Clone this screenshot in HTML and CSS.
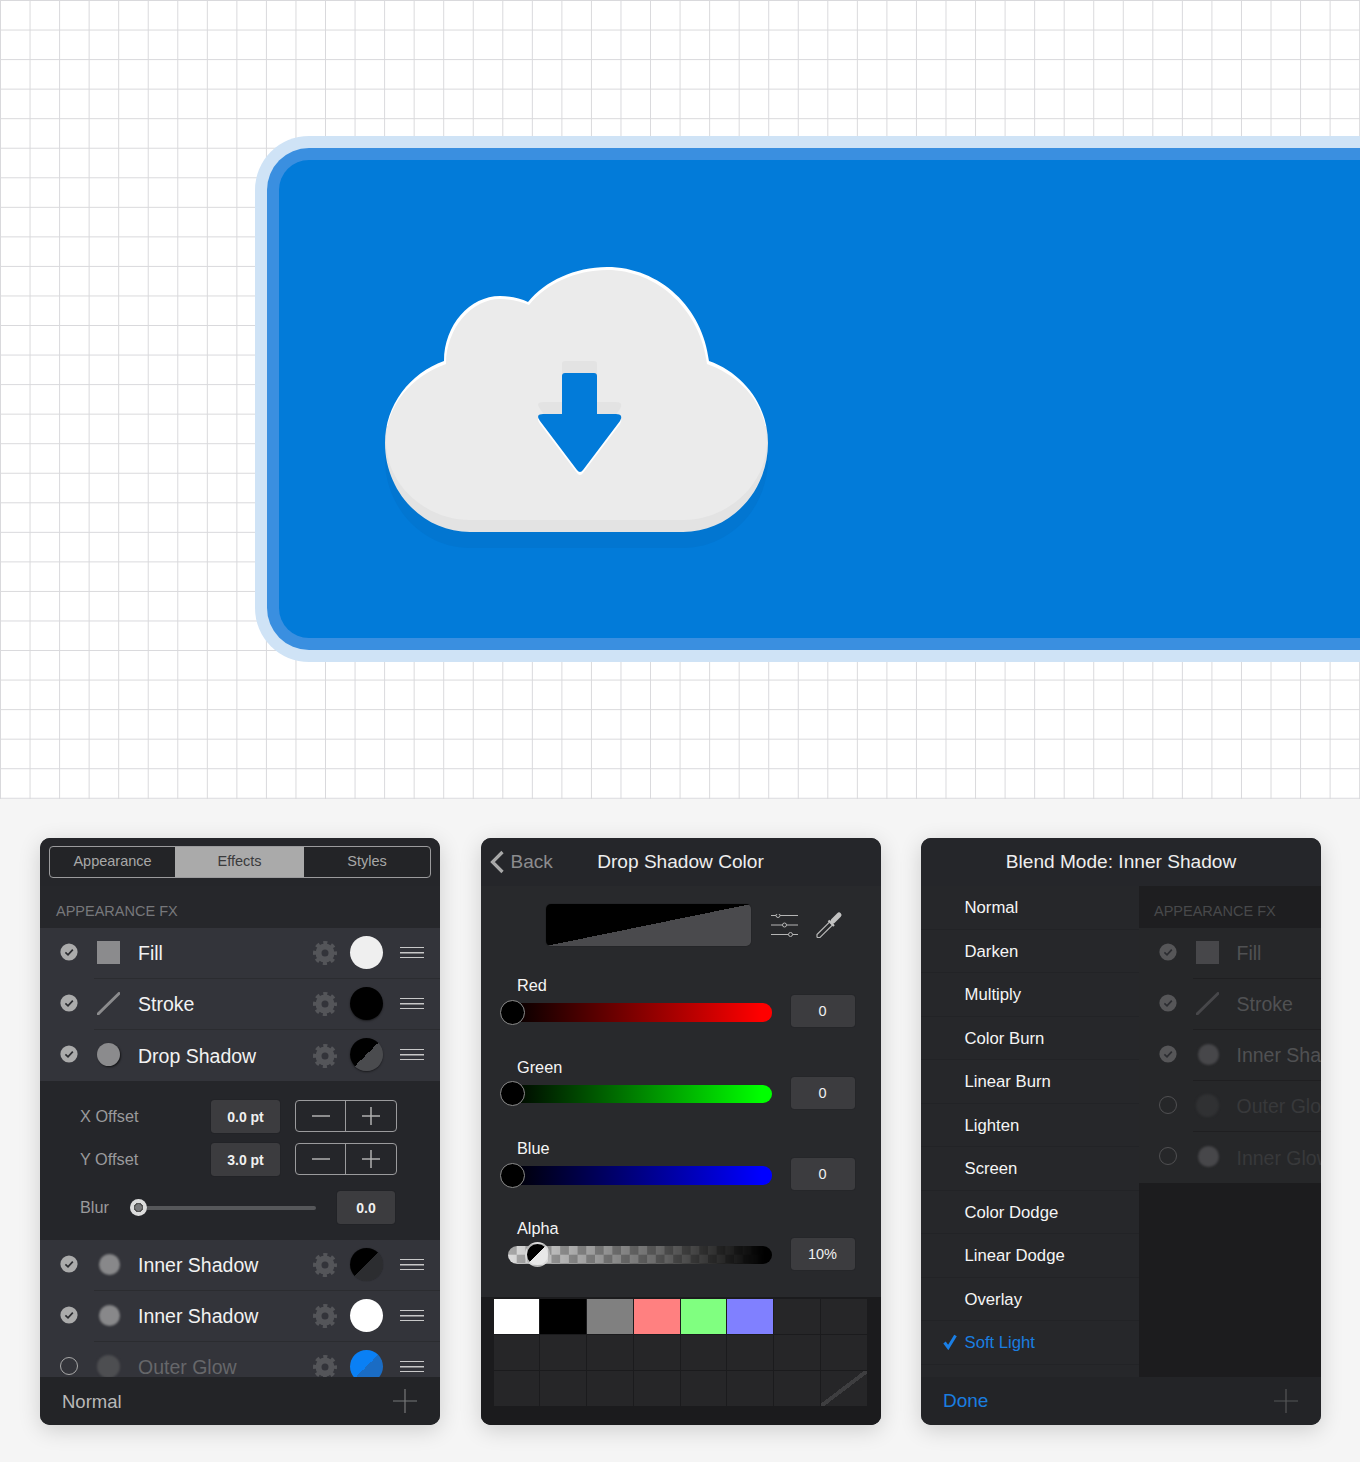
FILE: index.html
```html
<!DOCTYPE html>
<html lang="en">
  <head>
    <meta charset="UTF-8" />
    <meta name="viewport" content="width=device-width, initial-scale=1.0" />
    <title>Cloud download button</title>
    <link rel="stylesheet" href="styles.css">
  </head>
  <body>
    <svg class="defs" width="0" height="0">
      <symbol id="i-check" viewBox="0 0 18 18">
        <circle cx="9" cy="9" r="8.6" fill="currentColor" />
        <path d="M5.4 9.4 L8 11.8 L12.8 6.6" fill="none" stroke="#2c2d31" stroke-width="1.7" />
      </symbol>
      <symbol id="i-gear" viewBox="0 0 24 24">
        <circle cx="12" cy="12" r="6.5" fill="none" stroke="currentColor" stroke-width="6" />
        <circle cx="12" cy="12" r="10" fill="none" stroke="currentColor" stroke-width="4" stroke-dasharray="4 3.854" stroke-dashoffset="2" />
      </symbol>
      <symbol id="i-stroke" viewBox="0 0 23 23">
        <path d="M1 22 L22 1.5" stroke="currentColor" stroke-width="3" stroke-linecap="round" />
      </symbol>
      <symbol id="i-plus" viewBox="0 0 24 24">
        <path d="M0 12 H24 M12 0 V24" stroke="currentColor" stroke-width="1.2" />
      </symbol>
      <symbol id="i-minus" viewBox="0 0 24 24">
        <path d="M3 12 H21" stroke="currentColor" stroke-width="1.5" />
      </symbol>
      <symbol id="i-cross" viewBox="0 0 24 24">
        <path d="M3 12 H21 M12 3 V21" stroke="currentColor" stroke-width="1.5" />
      </symbol>
      <linearGradient id="cloud-edge" x1="0" y1="0" x2="0" y2="1">
        <stop offset="0.6" stop-color="#ffffff" />
        <stop offset="0.6" stop-color="#e3e3e3" />
      </linearGradient>
    </svg>

    <main class="artboard">
      <div class="big-button">
        <svg class="cloud" viewBox="380 262 394 290" width="394" height="290">
          <path transform="translate(0 16)" fill="#0276d1" d="M444 361 C444 325 470 296 500 296 C510 296 520 298 528 302 C545 281 575 267 607 267 C660 267 703 308 709 361 C743 373 768 405 768 443 C768 492 730 532 683 532 L470 532 C423 532 385 492 385 443 C385 405 410 373 444 361 Z" />
          <path fill="url(#cloud-edge)" d="M444 361 C444 325 470 296 500 296 C510 296 520 298 528 302 C545 281 575 267 607 267 C660 267 703 308 709 361 C743 373 768 405 768 443 C768 492 730 532 683 532 L470 532 C423 532 385 492 385 443 C385 405 410 373 444 361 Z" />
          <path fill="#ebebeb" d="M446 364 C446 328 472 299 500 299 C510 299 520 301 529 305 C546 284 575 270 607 270 C658 270 701 311 707 364 C741 376 767 405 767 441 C767 484 728 520 683 520 L470 520 C425 520 386 484 386 441 C386 405 412 376 446 364 Z" />
          <path transform="translate(0 -12)" fill="#e3e3e3" d="M565 373 H594 Q597 373 597 376 V414 H616 Q624 414 620 421 L583 470 Q580 474 577 470 L540 421 Q535 414 543 414 H562 V376 Q562 373 565 373 Z" />
          <path transform="translate(0 3)" fill="#ffffff" d="M565 373 H594 Q597 373 597 376 V414 H616 Q624 414 620 421 L583 470 Q580 474 577 470 L540 421 Q535 414 543 414 H562 V376 Q562 373 565 373 Z" />
          <path fill="#027bd9" d="M565 373 H594 Q597 373 597 376 V414 H616 Q624 414 620 421 L583 470 Q580 474 577 470 L540 421 Q535 414 543 414 H562 V376 Q562 373 565 373 Z" />
        </svg>
      </div>
    </main>

    <div class="panels">
      <!-- effects list -->
      <section class="panel">
        <header class="panel-head">
          <div class="tabs">
            <span class="tab tab-first">Appearance</span>
            <span class="tab tab-on">Effects</span>
            <span class="tab">Styles</span>
          </div>
        </header>
        <div class="panel-body">
          <h2 class="fx-title">APPEARANCE FX</h2>

          <div class="fx-row">
            <svg class="fx-check"><use href="#i-check" /></svg>
            <div class="fx-main">
              <span class="fx-icon icon-square"></span>
              <span class="fx-name">Fill</span>
              <svg class="fx-gear"><use href="#i-gear" /></svg>
              <span class="swatch swatch-light"></span>
              <span class="fx-lines"></span>
            </div>
          </div>
          <div class="fx-row">
            <svg class="fx-check"><use href="#i-check" /></svg>
            <div class="fx-main">
              <svg class="fx-icon icon-line"><use href="#i-stroke" /></svg>
              <span class="fx-name">Stroke</span>
              <svg class="fx-gear"><use href="#i-gear" /></svg>
              <span class="swatch swatch-black"></span>
              <span class="fx-lines"></span>
            </div>
          </div>
          <div class="fx-row">
            <svg class="fx-check"><use href="#i-check" /></svg>
            <div class="fx-main fx-main-last">
              <span class="fx-icon icon-circle"></span>
              <span class="fx-name">Drop Shadow</span>
              <svg class="fx-gear"><use href="#i-gear" /></svg>
              <span class="swatch swatch-half"></span>
              <span class="fx-lines"></span>
            </div>
          </div>

          <div class="fx-options">
            <div class="opt-row">
              <span class="opt-label">X Offset</span>
              <span class="value-box value-pt">0.0 pt</span>
              <div class="stepper">
                <span class="step"><svg class="step-icon"><use href="#i-minus" /></svg></span>
                <span class="step"><svg class="step-icon"><use href="#i-cross" /></svg></span>
              </div>
            </div>
            <div class="opt-row">
              <span class="opt-label">Y Offset</span>
              <span class="value-box value-pt">3.0 pt</span>
              <div class="stepper">
                <span class="step"><svg class="step-icon"><use href="#i-minus" /></svg></span>
                <span class="step"><svg class="step-icon"><use href="#i-cross" /></svg></span>
              </div>
            </div>
            <div class="opt-row">
              <span class="opt-label opt-label-short">Blur</span>
              <div class="blur-slider"><span class="blur-thumb"></span></div>
              <span class="value-box value-blur">0.0</span>
            </div>
          </div>

          <div class="fx-row">
            <svg class="fx-check"><use href="#i-check" /></svg>
            <div class="fx-main">
              <span class="fx-icon icon-blur"></span>
              <span class="fx-name">Inner Shadow</span>
              <svg class="fx-gear"><use href="#i-gear" /></svg>
              <span class="swatch swatch-half-dark"></span>
              <span class="fx-lines"></span>
            </div>
          </div>
          <div class="fx-row">
            <svg class="fx-check"><use href="#i-check" /></svg>
            <div class="fx-main">
              <span class="fx-icon icon-blur"></span>
              <span class="fx-name">Inner Shadow</span>
              <svg class="fx-gear"><use href="#i-gear" /></svg>
              <span class="swatch swatch-white"></span>
              <span class="fx-lines"></span>
            </div>
          </div>
          <div class="fx-row">
            <span class="fx-radio"></span>
            <div class="fx-main">
              <span class="fx-icon icon-blur icon-off"></span>
              <span class="fx-name fx-name-off">Outer Glow</span>
              <svg class="fx-gear"><use href="#i-gear" /></svg>
              <span class="swatch swatch-blue"></span>
              <span class="fx-lines"></span>
            </div>
          </div>
        </div>
        <footer class="panel-foot">
          <span class="foot-text">Normal</span>
          <svg class="foot-plus"><use href="#i-plus" /></svg>
        </footer>
      </section>

      <!-- colour picker -->
      <section class="panel">
        <header class="panel-head panel-head-title">
          <span class="back">
            <svg class="back-icon" viewBox="0 0 14 24"><path d="M12.5 2 L2.5 12 L12.5 22" fill="none" stroke="#a8a8a8" stroke-width="3.2" /></svg>
            Back
          </span>
          <h2 class="head-title">Drop Shadow Color</h2>
        </header>
        <div class="panel-body picker">
          <div class="preview-row">
            <span class="preview"></span>
            <svg class="tool-icon tool-sliders" viewBox="0 0 27 23">
              <path d="M0 1.5 H27 M0 11 H27 M0 20.5 H27" stroke="#b5b5b5" stroke-width="1" />
              <circle cx="7" cy="1.5" r="2" fill="#28292c" stroke="#b5b5b5" />
              <circle cx="13.5" cy="11" r="2" fill="#28292c" stroke="#b5b5b5" />
              <circle cx="19.5" cy="20.5" r="2" fill="#28292c" stroke="#b5b5b5" />
            </svg>
            <svg class="tool-icon tool-dropper" viewBox="0 0 28 28">
              <path d="M2 23.5 L15 10.5 L18 13.5 L5 26.5 L2.5 26.5 L2 26 Z" fill="none" stroke="#b5b5b5" stroke-width="1.2" />
              <path d="M13.5 9.5 L19 15" stroke="#c2c2c2" stroke-width="2.2" />
              <path d="M18 10 L24 4" stroke="#c2c2c2" stroke-width="5" stroke-linecap="round" />
            </svg>
          </div>

          <div class="color-row">
            <div class="color-col">
              <span class="color-label">Red</span>
              <div class="track track-red"><span class="thumb"></span></div>
            </div>
            <span class="value-box value-color">0</span>
          </div>
          <div class="color-row">
            <div class="color-col">
              <span class="color-label">Green</span>
              <div class="track track-green"><span class="thumb"></span></div>
            </div>
            <span class="value-box value-color">0</span>
          </div>
          <div class="color-row">
            <div class="color-col">
              <span class="color-label">Blue</span>
              <div class="track track-blue"><span class="thumb"></span></div>
            </div>
            <span class="value-box value-color">0</span>
          </div>
          <div class="color-row color-row-alpha">
            <div class="color-col">
              <span class="color-label">Alpha</span>
              <div class="track track-alpha"><span class="thumb thumb-alpha"></span></div>
            </div>
            <span class="value-box value-color">10%</span>
          </div>

          <div class="palette">
            <div class="palette-grid">
              <span class="cell cell-white"></span>
              <span class="cell cell-black"></span>
              <span class="cell cell-gray"></span>
              <span class="cell cell-red"></span>
              <span class="cell cell-green"></span>
              <span class="cell cell-blue"></span>
              <span class="cell"></span><span class="cell"></span>
              <span class="cell"></span><span class="cell"></span><span class="cell"></span><span class="cell"></span>
              <span class="cell"></span><span class="cell"></span><span class="cell"></span><span class="cell"></span>
              <span class="cell"></span><span class="cell"></span><span class="cell"></span><span class="cell"></span>
              <span class="cell"></span><span class="cell"></span><span class="cell"></span>
              <span class="cell cell-none"></span>
            </div>
          </div>
        </div>
      </section>

      <!-- blend modes -->
      <section class="panel">
        <header class="panel-head panel-head-title">
          <h2 class="head-title">Blend Mode: Inner Shadow</h2>
        </header>
        <div class="panel-body blend">
          <ul class="blend-list">
            <li class="blend-item">Normal</li>
            <li class="blend-item">Darken</li>
            <li class="blend-item">Multiply</li>
            <li class="blend-item">Color Burn</li>
            <li class="blend-item">Linear Burn</li>
            <li class="blend-item">Lighten</li>
            <li class="blend-item">Screen</li>
            <li class="blend-item">Color Dodge</li>
            <li class="blend-item">Linear Dodge</li>
            <li class="blend-item">Overlay</li>
            <li class="blend-item blend-on">
              <svg class="blend-tick" viewBox="0 0 14 16"><path d="M1.5 8.5 L5.2 13.5 L12.5 1.5" fill="none" stroke="#1a7fe6" stroke-width="3" /></svg>
              Soft Light
            </li>
          </ul>
          <div class="dim">
            <h2 class="fx-title dim-title">APPEARANCE FX</h2>
            <div class="fx-row dim-row">
              <svg class="fx-check"><use href="#i-check" /></svg>
              <div class="fx-main">
                <span class="fx-icon icon-square"></span>
                <span class="fx-name">Fill</span>
              </div>
            </div>
            <div class="fx-row dim-row">
              <svg class="fx-check"><use href="#i-check" /></svg>
              <div class="fx-main">
                <svg class="fx-icon icon-line"><use href="#i-stroke" /></svg>
                <span class="fx-name">Stroke</span>
              </div>
            </div>
            <div class="fx-row dim-row">
              <svg class="fx-check"><use href="#i-check" /></svg>
              <div class="fx-main">
                <span class="fx-icon icon-blur"></span>
                <span class="fx-name">Inner Shadow</span>
              </div>
            </div>
            <div class="fx-row dim-row">
              <span class="fx-radio"></span>
              <div class="fx-main">
                <span class="fx-icon icon-blur icon-off"></span>
                <span class="fx-name fx-name-off">Outer Glow</span>
              </div>
            </div>
            <div class="fx-row dim-row">
              <span class="fx-radio"></span>
              <div class="fx-main fx-main-last">
                <span class="fx-icon icon-blur"></span>
                <span class="fx-name fx-name-off">Inner Glow</span>
              </div>
            </div>
          </div>
        </div>
        <footer class="panel-foot">
          <span class="foot-text foot-done">Done</span>
          <svg class="foot-plus foot-plus-dim"><use href="#i-plus" /></svg>
        </footer>
      </section>
    </div>
  </body>
</html>
```

FILE: styles.css
```css
* {
  box-sizing: border-box;
}

html,
body {
  margin: 0;
  padding: 0;
}

body {
  width: 1360px;
  height: 1462px;
  overflow: hidden;
  background-color: #f5f5f5;
  font-family: "Liberation Sans", Arial, sans-serif;
  color: #fff;
}

.defs {
  position: absolute;
}

h2 {
  margin: 0;
  font-weight: normal;
}

ul {
  margin: 0;
  padding: 0;
  list-style: none;
}

/* artboard with the grid */
.artboard {
  height: 799px;
  padding: 160px 0 0 279px;
  overflow: hidden;
  background-color: #fff;
  background-image:
    linear-gradient(#d9d9dc 1px, transparent 1px),
    linear-gradient(90deg, #d9d9dc 1px, transparent 1px);
  background-size: 29.55px 29.55px;
}

.big-button {
  width: 1200px;
  height: 478px;
  padding: 102px 0 0 101px;
  border-radius: 30px;
  background-color: #027bd9;
  box-shadow: 0 0 0 12px #3a8fe0, 0 0 0 24px #cfe3f6;
}

.cloud {
  display: block;
}

/* bottom row of panels */
.panels {
  display: flex;
  gap: 40.5px;
  padding: 39px 0 0 40px;
}

.panel {
  display: flex;
  flex-direction: column;
  width: 400px;
  height: 587px;
  overflow: hidden;
  border-radius: 10px;
  background-color: #28292c;
  box-shadow: 0 5px 22px rgba(0, 0, 0, 0.16);
}

.panel-head {
  flex: none;
  height: 48px;
  padding: 8px 9px 0;
  background-color: #25262a;
}

.panel-head-title {
  position: relative;
  padding: 0;
  display: flex;
  align-items: center;
  justify-content: center;
}

.head-title {
  font-size: 19.1px;
  color: #eee;
}

.panel-body {
  flex: 1;
  min-height: 0;
  overflow: hidden;
}

.panel-foot {
  flex: none;
  display: flex;
  align-items: center;
  justify-content: space-between;
  height: 48px;
  padding: 0 23px 0 22px;
  background-color: #232427;
}

.foot-text {
  margin-top: 1px;
  font-size: 18.5px;
  color: #b8b8b8;
}

.foot-done {
  margin-top: 0;
  font-size: 19px;
  color: #1a7ee0;
}

.foot-plus {
  width: 24px;
  height: 24px;
  color: #77787a;
}

.foot-plus-dim {
  color: #555658;
}

/* tabs */
.tabs {
  display: flex;
  height: 32px;
  border: 1px solid #9b9b9d;
  border-radius: 4px;
  overflow: hidden;
  background-color: #232427;
}

.tab {
  flex: 1;
  font-size: 14.5px;
  line-height: 28px;
  text-align: center;
  color: #a8a8a8;
}

.tab-first {
  flex: none;
  width: 125px;
}

.tab-on {
  flex: none;
  width: 129px;
  color: #3a3b3d;
  background-color: #aaaaaa;
}

/* effect rows */
.fx-title {
  height: 42px;
  padding: 17px 0 0 16px;
  font-size: 14.5px;
  line-height: 17px;
  color: #77787b;
  background-color: #26272b;
}

.fx-row {
  display: flex;
  align-items: center;
  width: 400px;
  height: 51px;
  background-color: #33343a;
}

.fx-check {
  flex: none;
  width: 18px;
  height: 18px;
  margin: -3px 16px 0 20px;
  color: #ababab;
}

.fx-radio {
  flex: none;
  width: 18px;
  height: 18px;
  margin: -3px 16px 0 20px;
  border: 1px solid #a8a8a8;
  border-radius: 50%;
}

.fx-main {
  flex: 1;
  display: flex;
  align-items: center;
  height: 51px;
  padding: 0 16px 1.5px 3px;
  border-bottom: 1px solid #2b2c30;
}

.fx-main-last {
  border-bottom: none;
}

.fx-icon {
  flex: none;
  width: 23px;
  height: 23px;
  margin-right: 18px;
}

.icon-square {
  background-color: #8b8b8d;
}

.icon-line {
  color: #8b8b8d;
}

.icon-circle {
  border-radius: 50%;
  background-color: #8b8b8d;
  box-shadow: 1px 1px 2px rgba(0, 0, 0, 0.6);
}

.icon-blur {
  width: 21px;
  height: 21px;
  margin: 0 18px 0 2px;
  border-radius: 50%;
  background-color: #88888a;
  filter: blur(1px);
}

.icon-off {
  width: 23px;
  height: 23px;
  margin: 0 18px 0 0;
  background-color: #4d4e51;
}

.fx-name {
  margin-top: 2.5px;
  font-size: 19.5px;
  white-space: nowrap;
  color: #f2f2f2;
}

.fx-name-off {
  color: #66676a;
}

.fx-gear {
  flex: none;
  width: 24px;
  height: 24px;
  margin-top: 1.5px;
  margin-left: auto;
  color: #545559;
}

.swatch {
  flex: none;
  width: 33px;
  height: 33px;
  margin: 0 17px 0 13px;
  border-radius: 50%;
}

.swatch-light {
  background-color: #efefef;
}

.swatch-white {
  background-color: #fff;
}

.swatch-black {
  background-color: #000;
  box-shadow: 0 1px 2px rgba(0, 0, 0, 0.5);
}

.swatch-half {
  background: linear-gradient(to bottom right, #000 50%, #4a4b4e 50%);
  box-shadow: 0 1px 2px rgba(0, 0, 0, 0.5);
}

.swatch-half-dark {
  background: linear-gradient(to bottom right, #000 50%, #2c2d30 50%);
  box-shadow: 0 0 1px rgba(0, 0, 0, 0.6);
}

.swatch-blue {
  background: linear-gradient(to bottom right, #0a80f5 50%, #1a6cc4 50%);
}

.fx-lines {
  flex: none;
  width: 24px;
  height: 11px;
  border-top: 1.5px solid #c8c8c8;
  border-bottom: 1.5px solid #c8c8c8;
  background: linear-gradient(#c8c8c8, #c8c8c8) center / 100% 1.5px no-repeat;
}

/* offset and blur options */
.fx-options {
  display: flex;
  flex-direction: column;
  gap: 10px;
  height: 159px;
  padding: 19px 45px 0 40px;
  background-color: #25262a;
}

.opt-row {
  display: flex;
  align-items: center;
  height: 33px;
}

.opt-row:last-child {
  margin-top: 5px;
}

.opt-label {
  flex: none;
  width: 131px;
  font-size: 16.3px;
  color: #9a9a9c;
}

.opt-label-short {
  width: 50px;
}

.value-box {
  flex: none;
  display: flex;
  align-items: center;
  justify-content: center;
  height: 33px;
  border-radius: 3px;
  font-size: 14.5px;
  color: #f0f0f0;
  background-color: #3c3c3f;
  box-shadow: 0 0 1px rgba(0, 0, 0, 0.6);
}

.value-pt {
  width: 69px;
  font-size: 14px;
  font-weight: bold;
}

.value-blur {
  width: 58px;
  margin-left: 21px;
  font-size: 14px;
  font-weight: bold;
}

.value-color {
  width: 64px;
  height: 32px;
}

.stepper {
  flex: none;
  display: flex;
  width: 102px;
  height: 32px;
  margin: -1px 0 0 15px;
  border: 1px solid #9b9b9d;
  border-radius: 4px;
}

.step {
  flex: 1;
  display: flex;
  align-items: center;
  justify-content: center;
  color: #b0b0b0;
}

.step:first-child {
  flex: none;
  width: 49px;
}

.step + .step {
  border-left: 1px solid #9b9b9d;
}

.step-icon {
  width: 24px;
  height: 24px;
}

.blur-slider {
  position: relative;
  flex: 1;
  height: 4px;
  border-radius: 2px;
  background-color: #56575a;
}

.blur-thumb {
  position: absolute;
  left: 0;
  top: -6.5px;
  width: 17px;
  height: 17px;
  border-radius: 50%;
  background: radial-gradient(circle, #77787a 0 3px, #555 3.5px 4.5px, #dcdcdc 5px);
}

/* colour picker */
.picker {
  display: flex;
  flex-direction: column;
  background-color: #28292c;
}

.preview-row {
  flex: none;
  display: flex;
  align-items: center;
  height: 42px;
  margin: 18px 0 30px;
  padding-left: 65px;
}

.preview {
  width: 205px;
  height: 42px;
  border-radius: 5px;
  background: linear-gradient(to bottom right, #000 50%, #4a4a4d 50%);
  box-shadow: 0 0 1px rgba(0, 0, 0, 0.8);
}

.tool-icon {
  flex: none;
}

.tool-sliders {
  width: 27px;
  height: 23px;
  margin-left: 20px;
}

.tool-dropper {
  width: 28px;
  height: 28px;
  margin-left: 17px;
}

.back {
  position: absolute;
  left: 9px;
  top: 12px;
  display: flex;
  align-items: center;
  gap: 7px;
  font-size: 19px;
  line-height: 22px;
  color: #8c8c8e;
}

.back-icon {
  width: 14px;
  height: 24px;
}

.color-row {
  flex: none;
  display: flex;
  align-items: flex-end;
  gap: 19px;
  height: 51px;
  margin-bottom: 30.5px;
  padding-left: 27px;
}

.color-row-alpha {
  margin-top: -2px;
  margin-bottom: 0;
}

.color-col {
  width: 264px;
  padding-bottom: 5.5px;
}

.color-label {
  display: block;
  height: 27px;
  margin-left: 9.5px;
  font-size: 16.3px;
  line-height: 19px;
  color: #f5f5f5;
}

.track {
  position: relative;
  height: 18.5px;
  border-radius: 9px;
}

.track-red {
  background-image: linear-gradient(to right, #000, #f00 96%);
}

.track-green {
  background-image: linear-gradient(to right, #000, #0f0 96%);
}

.track-blue {
  background-image: linear-gradient(to right, #000, #00f 96%);
}

.track-alpha {
  background-color: #000;
  background-image:
    linear-gradient(to right, rgba(0, 0, 0, 0), rgba(0, 0, 0, 0.5) 55%, #000 97%),
    repeating-conic-gradient(#dcdcdc 0 25%, #a8a8a8 0 50%);
  background-size: 100% 100%, 17.4px 17.4px;
}

.thumb {
  position: absolute;
  left: -7.5px;
  top: -3.5px;
  width: 25px;
  height: 25px;
  border: 1.2px solid #8c8c8c;
  border-radius: 50%;
  background-color: #000;
}

.thumb-alpha {
  left: 17px;
  border: 2px solid rgba(215, 215, 215, 0.85);
  background: linear-gradient(to bottom right, #000 50%, #e8e8e8 50%);
}

.palette {
  flex: none;
  height: 128px;
  margin-top: auto;
  padding: 2px 14px 0 13px;
  background-color: #1b1b1d;
}

.palette-grid {
  display: grid;
  grid-template-columns: repeat(8, 1fr);
  grid-auto-rows: 35px;
  gap: 1px;
}

.cell {
  background-color: #262628;
}

.cell-white {
  background-color: #fff;
}

.cell-black {
  background-color: #000;
}

.cell-gray {
  background-color: #808080;
}

.cell-red {
  background-color: #ff8080;
}

.cell-green {
  background-color: #80ff80;
}

.cell-blue {
  background-color: #8080ff;
}

.cell-none {
  background-image: linear-gradient(to bottom right, transparent 46.5%, #3e3e40 46.5% 53.5%, transparent 53.5%);
}

/* blend modes */
.blend {
  display: flex;
}

.blend-list {
  flex: none;
  width: 218px;
  background-color: #26272a;
}

.blend-item {
  position: relative;
  height: 43.5px;
  padding-left: 43.5px;
  border-bottom: 1px solid #222326;
  font-size: 16.7px;
  line-height: 44px;
  color: #f5f5f5;
}

.blend-on {
  color: #1a7ee0;
}

.blend-tick {
  position: absolute;
  left: 22px;
  top: 13px;
  width: 14px;
  height: 16px;
}

.dim {
  flex: 1;
  overflow: hidden;
  background-color: #1c1c1e;
}

.dim-title {
  padding-left: 15px;
  color: #48494b;
  background-color: #1e1e20;
}

.dim-row {
  background-color: #262729;
}

.dim-row .fx-check,
.dim-row .fx-radio {
  margin-right: 15.5px;
}

.dim-row .fx-main {
  border-bottom-color: #1f1f21;
}

.dim-row .fx-check {
  color: #565658;
}

.dim-row .fx-radio {
  border-color: #505052;
}

.dim-row .icon-square,
.dim-row .icon-blur {
  background-color: #47474a;
}

.dim-row .icon-off {
  background-color: #303133;
}

.dim-row .icon-line {
  color: #47474a;
}

.dim-row .fx-name {
  color: #505153;
}

.dim-row .fx-name-off {
  color: #38393b;
}
```
